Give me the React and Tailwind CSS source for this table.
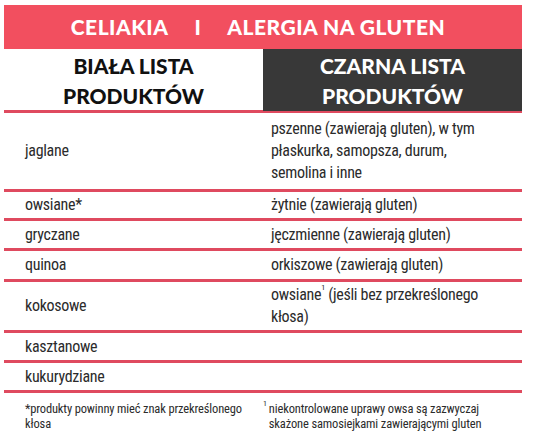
const body = 'font-["Roboto_Condensed","DejaVu_Sans_Condensed",sans-serif]';
const head = 'font-["Lato","Noto_Sans",sans-serif] font-black';

const rows = [
  { left: 'jaglane', right: ['pszenne (zawierają gluten), w tym', 'płaskurka, samopsza, durum,', 'semolina i inne'], h: 'py-[5px]' },
  { left: 'owsiane*', right: ['żytnie (zawierają gluten)'], h: 'h-[26px]' },
  { left: 'gryczane', right: ['jęczmienne (zawierają gluten)'], h: 'h-[27px]' },
  { left: 'quinoa', right: ['orkiszowe (zawierają gluten)'], h: 'h-[28px]' },
  { left: 'kokosowe', right: null, h: 'h-[48px]' },
  { left: 'kasztanowe', right: [], h: 'h-[27px]' },
  { left: 'kukurydziane', right: [], h: 'h-[27px]' },
];

export default function App() {
  return (
    <div className="bg-white w-[533px] h-[447px] pt-[5px] pl-[4px]">
      <div className="w-[518px]">
        <div className={`${head} h-[44px] bg-[#f24f5f] text-white text-[21px] tracking-[0.5px] flex items-center justify-center gap-[26px] pr-[10px]`}>
          <span>CELIAKIA</span>
          <span>I</span>
          <span>ALERGIA NA GLUTEN</span>
        </div>
        <div className={`${head} grid grid-cols-2 h-[61px] text-[21px] leading-[30px] text-center`}>
          <div className="flex flex-col justify-center pt-[2px] text-[#111]">
            <span>BIAŁA LISTA</span>
            <span>PRODUKTÓW</span>
          </div>
          <div className="flex flex-col justify-center pt-[2px] bg-[#383838] text-white">
            <span>CZARNA LISTA</span>
            <span>PRODUKTÓW</span>
          </div>
        </div>
        <div className={`${body} text-[16px] tracking-[-0.3px] leading-[22px] text-[#2b2b2b]`}>
          {rows.map(r => (
            <div key={r.left}>
              <div className="h-[3px] bg-[#df4a5f]" />
              <div className={`grid grid-cols-2 items-center ${r.h}`}>
                <div className="pl-[21px]">{r.left}</div>
                <div className="pl-[8px]">
                  {r.right === null ? (
                    <>
                      <div>owsiane<sup className="text-[8px] leading-none align-super">1</sup> (jeśli bez przekreślonego</div>
                      <div>kłosa)</div>
                    </>
                  ) : r.right.map(t => <div key={t}>{t}</div>)}
                </div>
              </div>
            </div>
          ))}
          <div className="h-[3px] bg-[#df4a5f]" />
        </div>
        <div className={`${body} grid grid-cols-2 pt-[8px] text-[12.5px] tracking-[-0.15px] leading-[15px] text-[#2b2b2b]`}>
          <div className="pl-[21px]">
            <div>*produkty powinny mieć znak przekreślonego</div>
            <div>kłosa</div>
          </div>
          <div className="flex">
            <sup className="text-[8px] leading-none pt-[3px] pr-[2px]">1</sup>
            <div>
              <div>niekontrolowane uprawy owsa są zazwyczaj</div>
              <div>skażone samosiejkami zawierającymi gluten</div>
            </div>
          </div>
        </div>
      </div>
    </div>
  );
}
